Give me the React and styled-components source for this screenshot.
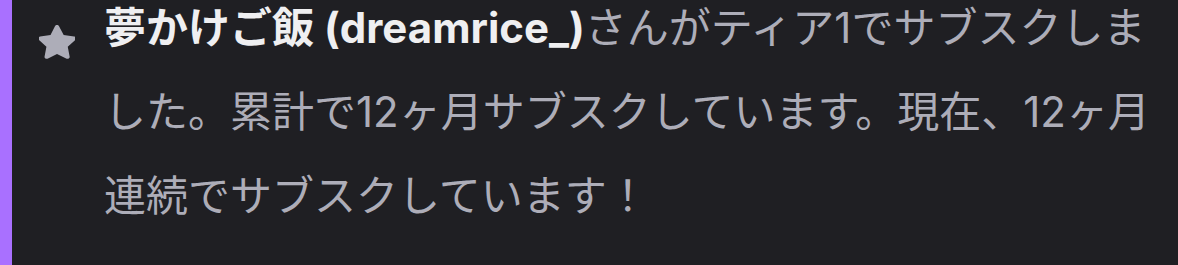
import React from 'react';
import styled, { createGlobalStyle } from 'styled-components';

const GlobalStyle = createGlobalStyle`
  html, body {
    margin: 0;
    padding: 0;
    background-color: #1f1f23;
    overflow: hidden;
  }
`;

const Notice = styled.div`
  display: flex;
  align-items: flex-start;
  width: 1178px;
  height: 265px;
  box-sizing: border-box;
  border-left: 12px solid #a970ff;
  background-color: #1f1f23;
  font-family: Inter, "Noto Sans CJK JP", sans-serif;
`;

const IconSlot = styled.div`
  flex: 0 0 auto;
  width: 36px;
  height: 34px;
  margin: 25px 0 0 27px;
  color: #adadb8;

  svg {
    display: block;
  }
`;

const Message = styled.p`
  flex: 1;
  margin: -14px 14px 0 29px;
  font-size: 42px;
  line-height: 84px;
  color: #adadb8;
`;

const Name = styled.span`
  font-weight: 700;
  color: #efeff1;
`;

const StarIcon = () => (
  <svg width="36" height="34" viewBox="2.3 1.3 19.4 19.5" preserveAspectRatio="none" fill="currentColor">
    <path d="M12 1.3c.5 0 .9.3 1.1.7l2.5 5.1 5.6.8c.9.1 1.3 1.3.7 1.9l-4.1 4 1 5.6c.2.9-.8 1.6-1.6 1.2L12 18l-5.1 2.6c-.8.4-1.8-.3-1.6-1.2l1-5.6-4.1-4c-.6-.6-.3-1.8.7-1.9l5.6-.8L10.9 2c.2-.4.6-.7 1.1-.7z" />
  </svg>
);

const App = () => (
  <>
    <GlobalStyle />
    <Notice>
      <IconSlot>
        <StarIcon />
      </IconSlot>
      <Message>
        <Name>夢かけご飯 (dreamrice_)</Name>
        さんがティア1でサブスクしました。累計で12ヶ月サブスクしています。現在、12ヶ月連続でサブスクしています！
      </Message>
    </Notice>
  </>
);

export default App;
